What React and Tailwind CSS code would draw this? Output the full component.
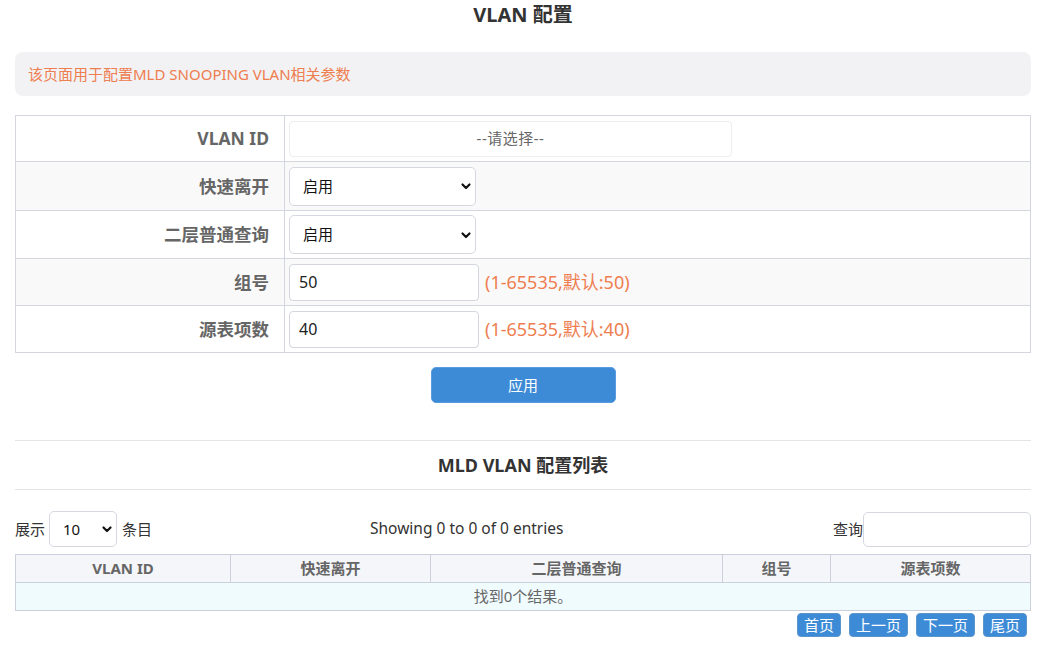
import React from 'react'

const font = { fontFamily: '"Noto Sans", "Noto Sans CJK SC", sans-serif' }

function Chevron() {
  return (
    <svg width="12" height="12" viewBox="0 0 12 12" className="pointer-events-none absolute right-[4px] top-1/2 -translate-y-1/2">
      <path d="M2.5 4.5 L6 8 L9.5 4.5" fill="none" stroke="#111" strokeWidth="2.2" strokeLinecap="round" strokeLinejoin="round" />
    </svg>
  )
}

function Select({ value, className }) {
  return (
    <div className={'relative ' + className}>
      <select
        defaultValue={value}
        className="h-full w-full appearance-none rounded-[5px] border border-[#d5d8e0] bg-white pl-[13px] text-[15px] text-[#111] outline-none"
      >
        <option>{value}</option>
      </select>
      <Chevron />
    </div>
  )
}

function FormRow({ label, h, shade, last, children }) {
  return (
    <div className={`flex ${h} ${shade ? 'bg-[#f9f9fa]' : 'bg-white'} ${last ? '' : 'border-b border-[#d3d6de]'}`}>
      <div className="flex w-[269px] shrink-0 items-center justify-end border-r border-[#d3d6de] pr-[15px] text-[17.5px] font-bold text-[#666]">
        {label}
      </div>
      <div className="flex items-center gap-[6px] pl-[4px]">{children}</div>
    </div>
  )
}

function NumInput({ value, hint }) {
  return (
    <>
      <input
        defaultValue={value}
        className="h-[37px] w-[190px] rounded-[4px] border border-[#d3d6de] bg-white pl-[9px] text-[16px] text-[#222] outline-none"
      />
      <span className="text-[18px] text-[#ee7d4f]">{hint}</span>
    </>
  )
}

const cols = [
  ['VLAN ID', 'w-[215px]'],
  ['快速离开', 'w-[200px]'],
  ['二层普通查询', 'w-[292px]'],
  ['组号', 'w-[108px]'],
  ['源表项数', 'flex-1'],
]

export default function App() {
  return (
    <div style={font} className="min-h-[649px] w-full bg-white pl-[15px] pr-[12px] text-[#333]">
      <div className="pt-[3px] text-center text-[20px] font-bold leading-[24px] text-[#333]">VLAN 配置</div>

      <div className="mt-[25px] flex h-[44px] items-center rounded-[8px] bg-[#f2f2f4] px-[13px] text-[15px] text-[#ee7d4f]">
        该页面用于配置MLD SNOOPING VLAN相关参数
      </div>

      <div className="mt-[19px] border border-[#d3d6de]">
        <FormRow label="VLAN ID" h="h-[46px]">
          <div className="flex h-[36px] w-[443px] items-center justify-center rounded-[4px] border border-[#eceef2] text-[15px] tracking-[0.5px] text-[#666]">
            --请选择--
          </div>
        </FormRow>
        <FormRow label="快速离开" h="h-[49px]" shade>
          <Select value="启用" className="h-[39px] w-[187px]" />
        </FormRow>
        <FormRow label="二层普通查询" h="h-[48px]">
          <Select value="启用" className="h-[39px] w-[187px]" />
        </FormRow>
        <FormRow label="组号" h="h-[47px]" shade>
          <NumInput value="50" hint="(1-65535,默认:50)" />
        </FormRow>
        <FormRow label="源表项数" h="h-[46px]" last>
          <NumInput value="40" hint="(1-65535,默认:40)" />
        </FormRow>
      </div>

      <div className="mt-[14px] flex justify-center">
        <button className="h-[36px] w-[185px] rounded-[5px] border border-[#5a9be0] bg-[#3d8bd6] text-[15px] text-white">
          应用
        </button>
      </div>

      <div className="mt-[37px] border-t border-[#e3e4e8]" />
      <div className="flex h-[49px] items-center justify-center border-b border-[#e3e4e8] text-[18px] font-bold text-[#333]">
        MLD VLAN 配置列表
      </div>

      <div className="mt-[21px] flex h-[36px] items-center text-[15px] text-[#333]">
        <span>展示</span>
        <div className="relative ml-[4px] h-[36px] w-[68px]">
          <select className="h-full w-full appearance-none rounded-[5px] border border-[#d5d8e0] bg-white pl-[13px] text-[15px] text-[#111] outline-none">
            <option>10</option>
          </select>
          <Chevron />
        </div>
        <span className="ml-[5px]">条目</span>
        <span className="ml-[218px] text-[15.5px]">Showing 0 to 0 of 0 entries</span>
        <span className="ml-auto">查询</span>
        <input className="h-[35px] w-[168px] rounded-[5px] border border-[#d5d8e0] outline-none" />
      </div>

      <div className="mt-[7px] border border-[#ccd0dc]">
        <div className="flex h-[27px] bg-[#f5f6fa] text-[15px] font-bold text-[#666]">
          {cols.map(([c, w], i) => (
            <div key={c} className={`${w} flex items-center justify-center ${i < cols.length - 1 ? 'border-r border-[#ccd0dc]' : ''}`}>
              {c}
            </div>
          ))}
        </div>
        <div className="flex h-[28px] items-center justify-center border-t border-[#ccd0dc] bg-[#f0fbfe] text-[15px] text-[#666]">
          找到0个结果。
        </div>
      </div>

      <div className="mt-[2px] flex justify-end gap-[8px] pr-[4px]">
        {['首页', '上一页', '下一页', '尾页'].map((t) => (
          <button key={t} className="h-[24px] rounded-[4px] border border-[#5a95cc] bg-[#3d8bd6] px-[6px] text-[15px] leading-none text-white">
            {t}
          </button>
        ))}
      </div>
    </div>
  )
}
